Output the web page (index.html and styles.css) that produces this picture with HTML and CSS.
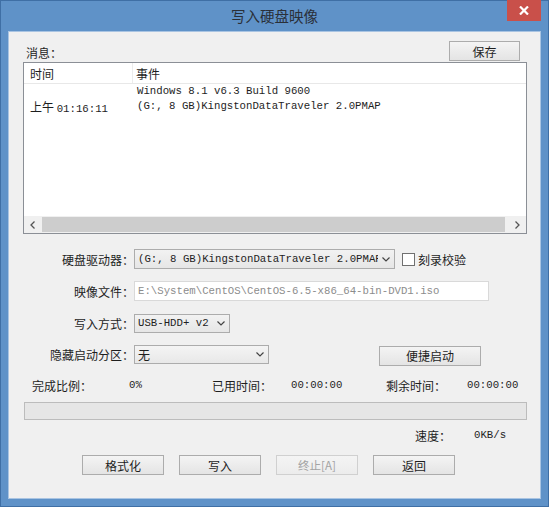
FILE: index.html
```html
<!DOCTYPE html>
<html>
<head>
<meta charset="utf-8">
<link rel="stylesheet" href="styles.css">
</head>
<body>
<div class="window">
  <div class="titlebar">
    <div class="title">写入硬盘映像</div>
    <div class="close">
      <svg width="10" height="9" viewBox="0 0 10 9"><path d="M1 0.5 L9 8.5 M9 0.5 L1 8.5" stroke="#fff" stroke-width="2.2" fill="none"/></svg>
    </div>
  </div>
  <div class="client">
    <div class="msg-head">
      <span class="msg-label">消息：</span>
      <div class="btn btn-save">保存</div>
    </div>
    <div class="listbox">
      <div class="lb-head">
        <span class="h-time">时间</span>
        <span class="h-event">事件</span>
      </div>
      <div class="lb-row">
        <div class="c-time">上午 <span class="mono">01:16:11</span></div>
        <div class="c-event mono">Windows 8.1 v6.3 Build 9600<br>(G:, 8 GB)KingstonDataTraveler 2.0PMAP</div>
      </div>
      <div class="lb-fill"></div>
      <div class="hscroll">
        <div class="arrow"><svg width="5" height="8" viewBox="0 0 5 8"><path d="M4.5 0.5 L1 4 L4.5 7.5" stroke="#555" stroke-width="1.3" fill="none"/></svg></div>
        <div class="track"><div class="thumb"></div></div>
        <div class="arrow"><svg width="5" height="8" viewBox="0 0 5 8"><path d="M0.5 0.5 L4 4 L0.5 7.5" stroke="#555" stroke-width="1.3" fill="none"/></svg></div>
      </div>
    </div>

    <div class="form-row row-drive">
      <span class="label">硬盘驱动器：</span>
      <div class="select sel-drive"><span class="sel-text mono">(G:, 8 GB)KingstonDataTraveler 2.0PMAP</span><span class="chev"><svg width="8" height="5" viewBox="0 0 8 5"><path d="M0.5 0.5 L4 4 L7.5 0.5" stroke="#444" stroke-width="1.2" fill="none"/></svg></span></div>
      <span class="check"></span>
      <span class="check-label">刻录校验</span>
    </div>
    <div class="form-row row-image">
      <span class="label">映像文件：</span>
      <div class="input mono">E:\System\CentOS\CentOS-6.5-x86_64-bin-DVD1.iso</div>
    </div>
    <div class="form-row row-mode">
      <span class="label">写入方式：</span>
      <div class="select sel-mode"><span class="sel-text mono">USB-HDD+ v2</span><span class="chev"><svg width="8" height="5" viewBox="0 0 8 5"><path d="M0.5 0.5 L4 4 L7.5 0.5" stroke="#444" stroke-width="1.2" fill="none"/></svg></span></div>
    </div>
    <div class="form-row row-hidden">
      <span class="label">隐藏启动分区：</span>
      <div class="select sel-hidden"><span class="sel-text">无</span><span class="chev"><svg width="8" height="5" viewBox="0 0 8 5"><path d="M0.5 0.5 L4 4 L7.5 0.5" stroke="#444" stroke-width="1.2" fill="none"/></svg></span></div>
      <div class="btn btn-quick">便捷启动</div>
    </div>

    <div class="stats">
      <span class="s1">完成比例：</span>
      <span class="s2 mono">0%</span>
      <span class="s3">已用时间：</span>
      <span class="s4 mono">00:00:00</span>
      <span class="s5">剩余时间：</span>
      <span class="s6 mono">00:00:00</span>
    </div>
    <div class="progress"></div>
    <div class="speed">
      <span class="sp-label">速度：</span>
      <span class="sp-val mono">0KB/s</span>
    </div>
    <div class="actions">
      <div class="btn act">格式化</div>
      <div class="btn act">写入</div>
      <div class="btn act disabled">终止[A]</div>
      <div class="btn act">返回</div>
    </div>
  </div>
</div>
</body>
</html>
```

FILE: styles.css
```css
* { box-sizing: border-box; }
html, body { margin: 0; padding: 0; }
body {
  width: 549px;
  height: 507px;
  overflow: hidden;
  font-family: "Noto Sans CJK SC", "Noto Sans", sans-serif;
  font-size: 12px;
  color: #1e1e1e;
}
.mono {
  font-family: "Liberation Mono", "Noto Sans CJK SC", monospace;
  font-size: 10.7px;
}
.window {
  width: 549px;
  height: 507px;
  background: #5f92c8;
  border: 1px solid #3f6fa5;
  display: flex;
  flex-direction: column;
  position: relative;
}
.titlebar {
  height: 30px;
  display: flex;
  align-items: center;
  justify-content: center;
}
.title {
  font-size: 14.5px;
  color: #2a2f38;
  margin-top: -1px;
}
.close {
  position: absolute;
  top: -1px;
  right: 7px;
  width: 34px;
  height: 21px;
  background: #c9504a;
  display: flex;
  align-items: center;
  justify-content: center;
}
.client {
  margin: 0 7px;
  height: 468px;
  background: #f0f0f0;
  border: 1px solid #a9c4e2;
  display: flex;
  flex-direction: column;
  padding-top: 9px;
}
.msg-head {
  height: 20px;
  display: flex;
  align-items: center;
  justify-content: space-between;
  padding-left: 17px;
  padding-right: 20px;
}
.msg-label { margin-top: 3px; }
.btn {
  height: 20px;
  border: 1px solid #acacac;
  background: linear-gradient(#f4f4f4, #e4e4e4);
  display: flex;
  align-items: center;
  justify-content: center;
  color: #1e1e1e;
}
.btn-save { width: 71px; }
.listbox {
  margin: 1px 13px 0 14px;
  height: 172px;
  border: 1px solid #8b8f96;
  background: #fff;
  display: flex;
  flex-direction: column;
}
.lb-head {
  height: 21px;
  border-bottom: 1px solid #e8e8e8;
  display: flex;
  align-items: center;
  padding-left: 6px;
}
.h-time {
  width: 103px;
  height: 100%;
  display: flex;
  align-items: center;
  border-right: 1px solid #ececec;
}
.h-event { padding-left: 3px; }
.lb-row {
  display: flex;
  padding-left: 6px;
  line-height: 15px;
}
.c-time {
  width: 107px;
  padding-top: 15px;
  white-space: nowrap;
}
.c-event { white-space: nowrap; }
.lb-fill { flex: 1; }
.hscroll {
  height: 17px;
  background: #f0f0f0;
  display: flex;
}
.arrow {
  width: 17px;
  display: flex;
  align-items: center;
  justify-content: center;
}
.track {
  flex: 1;
  display: flex;
  padding: 1px 4px 1px 1px;
}
.thumb {
  flex: 1;
  background: #cdcdcd;
}
.form-row {
  display: flex;
  align-items: center;
  height: 20px;
}
.row-drive { margin-top: 15px; }
.row-image { margin-top: 12px; }
.row-mode { margin-top: 12px; }
.row-hidden { margin-top: 11px; height: 21px; }
.label {
  width: 125px;
  text-align: right;
  white-space: nowrap;
}
.select {
  height: 20px;
  border: 1px solid #acacac;
  background: linear-gradient(#f2f2f2, #e6e6e6);
  display: flex;
  align-items: center;
  overflow: hidden;
}
.sel-text {
  flex: 1;
  padding-left: 3px;
  white-space: nowrap;
  overflow: hidden;
}
.chev {
  width: 16px;
  flex: none;
  display: flex;
  align-items: center;
  justify-content: center;
}
.sel-drive { width: 261px; }
.sel-mode { width: 96px; height: 19px; }
.sel-hidden { width: 135px; height: 19px; background: linear-gradient(#f4f4f4, #e8e8e8); }
.check {
  width: 13px;
  height: 13px;
  border: 1px solid #707070;
  background: #fff;
  margin-left: 7px;
}
.check-label { margin-left: 3px; }
.input {
  width: 355px;
  height: 20px;
  border: 1px solid #d9d9d9;
  background: #fff;
  color: #8c8c8c;
  display: flex;
  align-items: center;
  padding-left: 3px;
  white-space: nowrap;
}
.btn-quick {
  width: 102px;
  margin-left: 110px;
  margin-top: 2px;
}
.stats {
  margin-top: 12px;
  height: 16px;
  display: flex;
  align-items: center;
  padding-left: 23px;
  white-space: nowrap;
}
.s1 { width: 97px; }
.s2 { width: 83px; }
.s3 { width: 79px; }
.s4 { width: 95px; }
.s5 { width: 81px; }
.progress {
  margin: 9px 13px 0 15px;
  height: 18px;
  border: 1px solid #bcbcbc;
  background: #e6e6e6;
}
.speed {
  margin-top: 7px;
  height: 16px;
  display: flex;
  align-items: center;
  padding-left: 406px;
}
.sp-label { width: 59px; }
.actions {
  margin-top: 12px;
  display: flex;
  gap: 15px;
  padding-left: 73px;
}
.act { width: 82px; }
.disabled {
  color: #a3a3a3;
  border-color: #d0d0d0;
  background: linear-gradient(#f4f4f4, #ececec);
  font-size: 11.5px;
}
```
